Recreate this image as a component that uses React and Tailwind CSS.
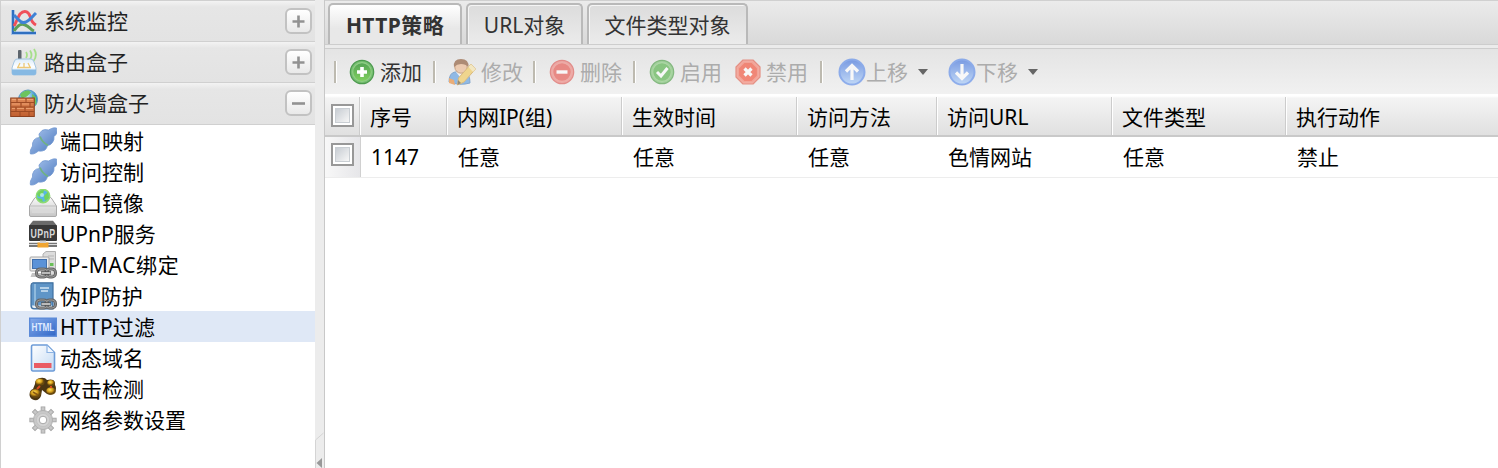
import { useState } from 'react';

// Sidebar group icons
const ChartIcon = () => (
  <svg viewBox="0 0 28 28" className="w-7 h-7">
    <path d="M3 3v23h23" fill="none" stroke="#a9c4e8" strokeWidth="4" />
    <path d="M3 3v23h23" fill="none" stroke="#2f6fc0" strokeWidth="2" />
    <path d="M4 24c4-6 7-8 11-6 4 1 5 4 9 6" fill="none" stroke="#5f9f58" strokeWidth="3" />
    <path d="M4 19c2-3 3-7 6-12 4-4 8-3 10 2 1 4 2 7 6 9" fill="none" stroke="#f0505a" strokeWidth="3" />
    <path d="M4 8c5 5 7 9 12 7 4-2 6-5 10-9" fill="none" stroke="#3f82d6" strokeWidth="3" />
  </svg>
);

const RouterIcon = () => (
  <svg viewBox="0 0 28 28" className="w-7 h-7">
    <defs>
      <linearGradient id="router" x2="0" y2="1">
        <stop offset="0" stopColor="#dcecfa" />
        <stop offset=".5" stopColor="#ffffff" />
        <stop offset="1" stopColor="#a5cdf0" />
      </linearGradient>
    </defs>
    <g fill="none" stroke="#a6df8a" strokeWidth="1.8">
      <path d="M16 4q2 3 0 6M20 2.5q3 4.5 0 9M24 1q4 6-.5 12" />
    </g>
    <rect x="8" y="2" width="3.5" height="11" rx="1" fill="#5d656d" />
    <path d="M7 11h14q2 0 3 3l2 6v5q0 2-2 2H4q-2 0-2-2v-5l2-6q1-3 3-3z" fill="url(#router)" stroke="#a4c5e1" />
    <path d="M2 21.5h24V25q0 2-2 2H4q-2 0-2-2z" fill="#86b9e3" />
    <path d="M10 15l-2 4M14 15v4M18 15l2 4M7 19.5h14" stroke="#ecc878" strokeWidth="1.3" fill="none" />
  </svg>
);

const FirewallIcon = () => (
  <svg viewBox="0 0 28 28" className="w-7 h-7">
    <defs>
      <radialGradient id="globe" cx=".4" cy=".3">
        <stop offset="0" stopColor="#d9f4ff" />
        <stop offset="1" stopColor="#348fc9" />
      </radialGradient>
      <linearGradient id="brick" x2="0" y2="1">
        <stop offset="0" stopColor="#e08a58" />
        <stop offset="1" stopColor="#c05f30" />
      </linearGradient>
    </defs>
    <circle cx="18" cy="10.5" r="9.5" fill="url(#globe)" stroke="#5a9ac2" />
    <path d="M10 6q3-5 9-4.5l2 2-4 4-5 2zM22 5l4 3 .5 8-4-3z" fill="#6cc45e" />
    <rect x=".7" y="9" width="23.6" height="18.5" fill="url(#brick)" stroke="#8d411f" />
    <path d="M1 13.5h23M1 18h23M1 22.5h23M7 9v5M16 9v5M11 14v4M20 14v4M6 18v5M15 18v5M10 23v4M19 23v4" stroke="#9d4b25" />
    <path d="M2 10.5h4M8 10.5h7M17 10.5h6M2 15h8M12 15h7M2 19.5h3M7 19.5h7M16 19.5h7" stroke="#f0a878" strokeWidth=".8" />
  </svg>
);

// Sidebar item icons
const PlugIcon = () => (
  <svg viewBox="0 0 28 28" className="w-7 h-7">
    <defs>
      <linearGradient id="plug" x2="1" y2="1">
        <stop offset=".1" stopColor="#a3c0ea" />
        <stop offset=".8" stopColor="#5b85c6" />
      </linearGradient>
    </defs>
    <path
      d="M27.500 1q-3-.5-5 .5l-3 1.500q-4-1-6.500.5l-3 3.500.5 3.500q-3.500 0-5.500 2.500-2 3-1.500 6L1.500 23q-.5 3 0 4 3 .3 5-1l3-2q4 .5 6.500-1 2-2 2.500-4.500 3.500-.5 5-3 2-3 1.500-6 2.500-2 3-4z"
      fill="url(#plug)"
      stroke="#7499d2"
      strokeWidth=".8"
      strokeLinejoin="round"
    />
    <path d="M11 9.500q2 5.500 8 9" fill="none" stroke="#6fb184" strokeWidth="1.8" />
  </svg>
);

const DriveIcon = () => (
  <svg viewBox="0 0 28 28" className="w-7 h-7">
    <defs>
      <linearGradient id="drive" x2="0" y2="1">
        <stop offset="0" stopColor="#fbfbfb" />
        <stop offset="1" stopColor="#c5c5c5" />
      </linearGradient>
    </defs>
    <path d="M5 10q1-2 3-2h12q2 0 3 2l4.500 7v9q0 1.500-1.500 1.500H2Q.5 27.500.5 26v-9z" fill="url(#drive)" stroke="#a8a8a8" />
    <path d="M1 17h26" stroke="#bdbdbd" />
    <rect x="3" y="20" width="22" height="4" fill="#d9d9d9" />
    <circle cx="14" cy="7" r="6.600" fill="#58b7e6" stroke="#8edc70" strokeWidth="1.6" />
    <path d="M8 5q3-4 7-4l-1 4-4 3zM15 7l4-4 1 6-4 3zM8 9l5 1 1 3q-4-1-6-4z" fill="#72d45a" />
    <circle cx="13" cy="6" r="2" fill="#cdf3fb" opacity=".7" />
  </svg>
);

const UpnpIcon = () => (
  <svg viewBox="0 0 28 28" className="w-7 h-7">
    <path d="M4 .8h20l4 5H0z" fill="#6b6b6b" />
    <rect y="5" width="28" height="16" rx="1" fill="#383838" />
    <text transform="translate(14 17.5) scale(1 1.5)" textAnchor="middle" fontSize="8.8" letterSpacing=".4" fontWeight="bold" fill="#d8d8d8" className="font-['Liberation_Sans',sans-serif]">UPnP</text>
    <path d="M0 23.5h28" stroke="#777" strokeWidth="1.5" />
    <path d="M0 26h28" stroke="#4a4a4a" strokeWidth="1.5" />
    <rect x="8.5" y="22.5" width="11" height="5" fill="#f0a531" />
    <rect x="11" y="20.5" width="6" height="2.5" fill="#d0d0d0" />
  </svg>
);

// Chain overlay in the lower right corner of an icon
const ChainLink = () => (
  <>
    <rect x="7.5" y="18" width="11" height="8" rx="3.5" fill="none" stroke="#666" strokeWidth="3" />
    <rect x="17" y="18" width="9.5" height="8" rx="3.5" fill="none" stroke="#666" strokeWidth="3" />
    <rect x="7.5" y="18" width="11" height="8" rx="3.5" fill="none" stroke="#999" />
    <rect x="17" y="18" width="9.5" height="8" rx="3.5" fill="none" stroke="#999" />
    <path d="M12 22h10" stroke="#4d4d4d" strokeWidth="3.4" />
    <path d="M12.5 22h9" stroke="#d8d8d8" strokeWidth="1.6" />
  </>
);

const ComputerLinkIcon = () => (
  <svg viewBox="0 0 28 28" className="w-7 h-7">
    <path d="M14 3l3-2.500h9.500V24H14z" fill="#dcdcdc" stroke="#b0b0b0" />
    <path d="M19 5h6M19 8h6" stroke="#b5b5b5" />
    <rect x="21" y="12" width="3.5" height="3" fill="#6abf58" />
    <rect x="1" y="6" width="19" height="14" rx="1" fill="#ececec" stroke="#a5a5a5" />
    <rect x="3.5" y="8.5" width="14" height="9" fill="#5b92d8" stroke="#4270ad" />
    <path d="M3 22h9v4H1.500z" fill="#c4c4c4" />
    <ChainLink />
  </svg>
);

const BookLinkIcon = () => (
  <svg viewBox="0 0 28 28" className="w-7 h-7">
    <path d="M4 .8h20v26H5q-3 0-3-3V3.500q0-2 2-2.700z" fill="#5f95c7" stroke="#3f6f9f" strokeWidth="1.2" />
    <path d="M6 2v21" stroke="#8fbadd" strokeWidth="2" />
    <path d="M3 23.5h20V26H5q-2 0-2-2.500z" fill="#e9eff4" />
    <path d="M11 6h9M12 9h7" stroke="#d3e5f4" strokeWidth="1.6" />
    <ChainLink />
  </svg>
);

const HtmlIcon = () => (
  <svg viewBox="0 0 28 28" className="w-7 h-7">
    <defs>
      <linearGradient id="html" x2="1" y2="1">
        <stop offset="0" stopColor="#86acec" />
        <stop offset="1" stopColor="#2f66c6" />
      </linearGradient>
    </defs>
    <rect x=".7" y="5.2" width="26.6" height="18" fill="url(#html)" stroke="#5b8ad8" strokeWidth="1.4" />
    <text transform="translate(14 18.4) scale(1 1.4)" textAnchor="middle" fontSize="8.2" fontWeight="bold" fill="#dfeaff" className="font-['Liberation_Sans',sans-serif]">HTML</text>
  </svg>
);

const PageIcon = () => (
  <svg viewBox="0 0 28 28" className="w-7 h-7">
    <defs>
      <linearGradient id="page" x2="1" y2="1">
        <stop offset="0" stopColor="#ffffff" />
        <stop offset="1" stopColor="#c3daf3" />
      </linearGradient>
    </defs>
    <path d="M4 1h14l7.500 7.500V25q0 2-1.500 2H4q-1.500 0-1.500-2V3Q2.500 1 4 1z" fill="url(#page)" stroke="#6d9cd8" strokeWidth="1.6" />
    <path d="M18 1.500V8.500h7" fill="#f2f8ff" stroke="#8db4e4" strokeWidth="1.2" />
    <rect x="5" y="19" width="17.5" height="5" fill="#ea5c64" />
  </svg>
);

const BinocularsIcon = () => (
  <svg viewBox="0 0 28 28" className="w-7 h-7">
    <defs>
      <radialGradient id="gold" cx=".4" cy=".35">
        <stop offset="0" stopColor="#ffe25a" />
        <stop offset=".6" stopColor="#d19a1a" />
        <stop offset="1" stopColor="#6a4a0e" />
      </radialGradient>
    </defs>
    <path d="M6 9q0-5 5-6t7 2q4-1 6 0 2 1 2 5 2 3 0 7-3 4-8 2l-5-4-1 6q-2 5-7 4-4-1-4.500-5Q.5 15 4 14z" fill="#4b3512" />
    <ellipse cx="11" cy="7" rx="4.5" ry="3.5" fill="url(#gold)" />
    <ellipse cx="22" cy="8" rx="3.8" ry="3" fill="url(#gold)" />
    <ellipse cx="6.500" cy="18.500" rx="5.5" ry="4.2" fill="url(#gold)" />
    <ellipse cx="22" cy="16" rx="4.8" ry="3.8" fill="url(#gold)" />
    <path d="M11 11l-3 3M22 11v2" stroke="#d94a20" strokeWidth="2" />
    <path d="M4 17l5 3" stroke="#8a5a12" strokeWidth="1.5" />
  </svg>
);

const GearIcon = () => (
  <svg viewBox="0 0 28 28" className="w-7 h-7">
    <g stroke="#a2a2a2" strokeWidth="4.6">
      <path d="M14 .4v27.200M.4 14h27.200M4.400 4.400l19.200 19.200M23.600 4.400L4.400 23.600" />
    </g>
    <g stroke="#c8c8c8" strokeWidth="3">
      <path d="M14 1.200v25.600M1.200 14h25.600M5 5l18 18M23 5L5 23" />
    </g>
    <circle cx="14" cy="14" r="9.5" fill="#c8c8c8" stroke="#b0b0b0" />
    <circle cx="14" cy="14" r="6.5" fill="#d4d4d4" stroke="#bcbcbc" strokeWidth=".6" />
    <circle cx="14" cy="14" r="3.8" fill="#fff" stroke="#a6a6a6" />
  </svg>
);

// Toolbar icons
const AddIcon = () => (
  <svg viewBox="0 0 26 26" className="w-[26px] h-[26px]">
    <defs>
      <linearGradient id="add" x2="0" y2="1">
        <stop offset="0" stopColor="#55a455" />
        <stop offset="1" stopColor="#7fcf5e" />
      </linearGradient>
    </defs>
    <circle cx="13" cy="13" r="11.7" fill="#75bd70" stroke="#4c9a4e" strokeWidth="1.2" />
    <circle cx="13" cy="13" r="9.3" fill="url(#add)" stroke="#8fce84" strokeWidth="1.2" />
    <path d="M13 8v10M8 13h10" stroke="#fff" strokeWidth="3.6" />
  </svg>
);

const EditIcon = () => (
  <svg viewBox="0 0 28 28" className="w-7 h-7 opacity-65">
    <path d="M1 24q0-9 6-10h10q5 2 5 11-10 3-21-1z" fill="#5f9fe2" stroke="#4c83bf" />
    <path d="M8 14l4 5 4-5z" fill="#f5f5f5" />
    <circle cx="13" cy="9" r="6.2" fill="#eebb93" stroke="#b57c4d" />
    <path d="M6 9q-1-8 7-8t7.500 8q-3-3-7.500-3-4 0-7 3z" fill="#8f5a38" />
    <path d="M1 20l5 2 1 5-6-2z" fill="#e98b3a" />
    <path d="M23 6l4.500 5L16 24l-6.500 3 1-7z" fill="#f2ca5c" stroke="#cfa04a" />
    <path d="M23 6l4.500 5-2.500 3-4.500-5z" fill="#f8e6ae" />
    <path d="M10 22l3 3-3.500 2z" fill="#6b5535" />
  </svg>
);

const DeleteIcon = () => (
  <svg viewBox="0 0 26 26" className="w-[26px] h-[26px] opacity-65">
    <circle cx="13" cy="13" r="11.7" fill="#ee8680" stroke="#dd5a55" strokeWidth="1.2" />
    <circle cx="13" cy="13" r="9.3" fill="#e6574f" stroke="#f08d86" strokeWidth="1.2" />
    <path d="M7.5 13h11" stroke="#fff" strokeWidth="3.4" />
  </svg>
);

const EnableIcon = () => (
  <svg viewBox="0 0 26 26" className="w-[26px] h-[26px] opacity-65">
    <circle cx="13" cy="13" r="11.7" fill="#7cc373" stroke="#4c9d46" strokeWidth="1.2" />
    <circle cx="13" cy="13" r="9.3" fill="#56b24a" stroke="#8dcd81" strokeWidth="1.2" />
    <path d="M8 13l4 4 6.500-8" fill="none" stroke="#fff" strokeWidth="3" />
  </svg>
);

const DisableIcon = () => (
  <svg viewBox="0 0 26 26" className="w-[26px] h-[26px] opacity-65">
    <path d="M8 1h10l7 7v10l-7 7H8l-7-7V8z" fill="#f78a7a" stroke="#e2614e" strokeWidth="1.2" strokeLinejoin="round" />
    <path d="M9 3.500h8l5.500 5.500v8L17 22.500H9L3.500 17V9z" fill="#f4523a" stroke="#f67f6c" strokeWidth="1.2" />
    <path d="M9.500 9.500l7 7M16.500 9.500l-7 7" stroke="#fff" strokeWidth="3.2" />
  </svg>
);

const MoveIcon = ({ down }) => (
  <svg viewBox="0 0 28 28" className="w-7 h-7 opacity-65">
    <defs>
      <linearGradient id="move" x2="0" y2="1">
        <stop offset="0" stopColor="#3f72df" />
        <stop offset="1" stopColor="#a9cdfb" />
      </linearGradient>
    </defs>
    <circle cx="14" cy="14" r="12.5" fill="url(#move)" stroke="#5b8bea" strokeWidth="2" />
    <path d={down ? 'M14 6v14M8 14.5l6 6 6-6' : 'M14 22V8M8 13.5l6-6 6 6'} fill="none" stroke="#fff" strokeWidth="3.2" />
  </svg>
);

const groups = [
  { name: '系统监控', Icon: ChartIcon },
  { name: '路由盒子', Icon: RouterIcon },
  { name: '防火墙盒子', Icon: FirewallIcon },
];

const items = [
  { name: '端口映射', Icon: PlugIcon },
  { name: '访问控制', Icon: PlugIcon },
  { name: '端口镜像', Icon: DriveIcon },
  { name: 'UPnP服务', Icon: UpnpIcon },
  { name: 'IP-MAC绑定', Icon: ComputerLinkIcon, spacing: 'tracking-[0.7px]' },
  { name: '伪IP防护', Icon: BookLinkIcon },
  { name: 'HTTP过滤', Icon: HtmlIcon, spacing: 'tracking-[0.2px]' },
  { name: '动态域名', Icon: PageIcon },
  { name: '攻击检测', Icon: BinocularsIcon },
  { name: '网络参数设置', Icon: GearIcon },
];

const tabs = [
  { name: 'HTTP策略', width: 'w-[134px]' },
  { name: 'URL对象', width: 'w-[117px]' },
  { name: '文件类型对象', width: 'w-[161px]' },
];

const columns = [
  { name: '序号', value: '1147', width: 'w-[87px]' },
  { name: '内网IP(组)', value: '任意', width: 'w-[175px]' },
  { name: '生效时间', value: '任意', width: 'w-[175px]' },
  { name: '访问方法', value: '任意', width: 'w-[140px]' },
  { name: '访问URL', value: '色情网站', width: 'w-[175px]' },
  { name: '文件类型', value: '任意', width: 'w-[174px]' },
  { name: '执行动作', value: '禁止', width: 'flex-1' },
];

function ToggleButton({ open }) {
  return (
    <span className="flex items-center justify-center w-[27px] h-[26px] rounded-[6px] border-2 border-[#c2c2c2] bg-linear-to-b from-white to-[#e9e9e9]">
      <svg viewBox="0 0 13 13" className="w-[13px] h-[13px]">
        <path d={open ? 'M0 6.5h13' : 'M0.5 6.5h12M6.5 0.5v12'} stroke="#929292" strokeWidth="2.6" />
      </svg>
    </span>
  );
}

function Sidebar() {
  const [selected, setSelected] = useState('HTTP过滤');

  return (
    <div className="w-[315px] shrink-0 border-l border-t border-[#d0d0d0] bg-white">
      {groups.map(({ name, Icon }, index) => (
        <div
          key={name}
          className={`flex items-center pl-[9px] pr-[3px] border-b border-[#d0d0d0] bg-linear-to-b from-[#f3f3f3] from-0% via-[#e6e6e6] via-15% to-[#e3e3e3] text-[#222] ${index === 2 ? 'h-[42px] pb-px' : 'h-[41px]'}`}
        >
          <Icon />
          <span className="ml-[6px] flex-1">{name}</span>
          <ToggleButton open={index === 2} />
        </div>
      ))}
      {items.map(({ name, Icon, spacing = '' }) => (
        <div
          key={name}
          onClick={() => setSelected(name)}
          className={`flex items-center h-[31px] pl-7 pt-px cursor-pointer ${selected === name ? 'bg-[#dfe8f6]' : ''}`}
        >
          <Icon />
          <span className={`ml-[3px] ${spacing}`}>{name}</span>
        </div>
      ))}
    </div>
  );
}

function Splitter() {
  return (
    <div className="flex flex-col justify-end w-[10px] shrink-0 border-r border-[#c8c8c8] bg-[#ececec]">
      <svg viewBox="0 0 9 36" className="w-[9px] h-9">
        <path d="M.5 36V8L8.5 1" fill="none" stroke="#d4d4d4" />
        <path d="M7 26v10L1.5 31z" fill="#999" />
      </svg>
    </div>
  );
}

function Separator() {
  return <span className="w-[3px] h-[22px] -ml-px shrink-0 border-l-2 border-[#bdbab0] bg-white" />;
}

function ToolButton({ label, icon, active, menu, className }) {
  return (
    <button className={`flex items-center h-full shrink-0 ${active ? 'text-[#333]' : 'text-[#acacac]'} ${className}`}>
      {icon}
      <span className={menu ? '' : 'ml-[5px]'}>{label}</span>
      {menu && <span className="ml-[10px] border-x-[5px] border-x-transparent border-t-[6px] border-t-[#666]" />}
    </button>
  );
}

function Checkbox() {
  return (
    <span className="flex w-[23px] h-[23px] border-2 border-[#989898] bg-white p-[2px]">
      <span className="flex-1 border border-[#c9ced3] bg-linear-to-br from-[#c8cdd3] to-[#f7f7f7]" />
    </span>
  );
}

export default function App() {
  const [activeTab, setActiveTab] = useState('HTTP策略');

  return (
    <div className="flex w-[1498px] h-[468px] overflow-hidden bg-white text-[21px] leading-[30px] text-black whitespace-nowrap font-['Noto_Sans','Noto_Sans_CJK_SC',sans-serif]">
      <Sidebar />
      <Splitter />
      <div className="flex-1 min-w-0">
        <div className="flex items-end gap-1 h-11 pl-[3px] border-t border-[#d0d0d0] bg-linear-to-b from-[#ebebeb] to-[#d9d9d9]">
          {tabs.map(({ name, width }) => (
            <button
              key={name}
              onClick={() => setActiveTab(name)}
              className={`h-[41px] rounded-t-[5px] border-2 border-b-0 border-[#b9b9b9] text-[#333] ${width} ${activeTab === name ? 'font-bold tracking-[0.4px] bg-linear-to-b from-white to-[#e8e8e8] to-60%' : 'bg-linear-to-b from-[#dcdcdc] to-[#ebebeb] shadow-[inset_1px_1px_0_#f5f5f5]'}`}
            >
              {name}
            </button>
          ))}
        </div>
        <div className="h-[5px] border-y border-[#cdcdcd] bg-[#ebebeb]" />

        <div className="flex items-center h-[45px] pl-[10px] bg-linear-to-b from-[#e4e4e4] to-[#f1f1f1]">
          <Separator />
          <ToolButton label="添加" icon={<AddIcon />} active className="ml-3 w-[85px]" />
          <Separator />
          <ToolButton label="修改" icon={<EditIcon />} className="ml-3 w-[86px]" />
          <Separator />
          <ToolButton label="删除" icon={<DeleteIcon />} className="ml-[13px] w-[85px]" />
          <Separator />
          <ToolButton label="启用" icon={<EnableIcon />} className="ml-[13px] w-[86px]" />
          <ToolButton label="禁用" icon={<DisableIcon />} className="w-[86px]" />
          <Separator />
          <ToolButton label="上移" icon={<MoveIcon />} menu className="ml-[15px] w-[110px]" />
          <ToolButton label="下移" icon={<MoveIcon down />} menu />
        </div>

        <div className="flex h-[43px] pt-[3px] border-b-2 border-[#c9c9c9] bg-linear-to-b from-white from-5% via-[#f4f4f4] via-10% to-[#e0e0e0]">
          <div className="flex items-center w-[35px] pl-[6px] pb-px border-r border-[#cccccc]">
            <Checkbox />
          </div>
          {columns.map(({ name, width }) => (
            <div
              key={name}
              className={`flex items-center pl-[9px] pt-px border-l border-l-white ${width} ${width === 'flex-1' ? '' : 'border-r border-r-[#cccccc]'}`}
            >
              {name}
            </div>
          ))}
        </div>

        <div className="flex h-[41px] border-b border-[#ededed]">
          <div className="flex items-center w-[36px] pl-[6px] pb-[6px] border-r border-[#d0d0d0] bg-linear-to-r from-[#f8f8f8] to-[#e6e6e9]">
            <Checkbox />
          </div>
          {columns.map(({ name, value, width }) => (
            <div key={name} className={`flex items-center pl-[10px] ${width}`}>
              {value}
            </div>
          ))}
        </div>
      </div>
    </div>
  );
}
